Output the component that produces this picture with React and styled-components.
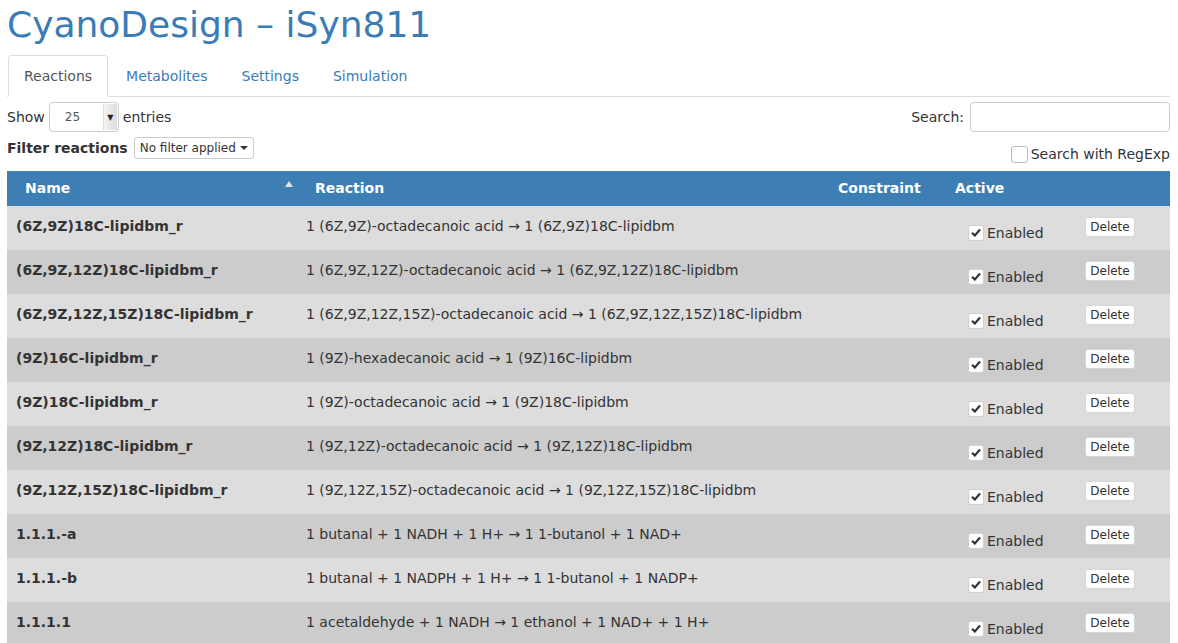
import React from "react";
import styled, { createGlobalStyle } from "styled-components";

const GlobalStyle = createGlobalStyle`
  html, body { margin: 0; padding: 0; background: #fff; }
  body {
    font-family: "DejaVu Sans", "Liberation Sans", sans-serif;
    font-size: 14px;
    color: #333;
  }
  * { box-sizing: border-box; }
`;

const Page = styled.div`
  padding: 5px 8px 0 7px;
`;

const Title = styled.h1`
  margin: 0 0 10px 0;
  font-size: 36px;
  line-height: 40px;
  font-weight: normal;
  color: #3a7cb6;
`;

const Tabs = styled.ul`
  list-style: none;
  margin: 0;
  padding: 0 0 0 1px;
  display: flex;
  border-bottom: 1px solid #ddd;
`;

const Tab = styled.li`
  margin: 0 2px -1px 0;
  padding: 10px 15px;
  line-height: 20px;
  border: 1px solid ${(p) => (p.$active ? "#ddd" : "transparent")};
  border-bottom-color: ${(p) => (p.$active ? "#fff" : "transparent")};
  border-radius: 4px 4px 0 0;
  background: ${(p) => (p.$active ? "#fff" : "transparent")};
  color: ${(p) => (p.$active ? "#555" : "#3a7cb6")};
`;

const Controls = styled.div`
  display: flex;
  justify-content: space-between;
  margin-top: 5px;
`;

const LeftCol = styled.div`
  display: flex;
  flex-direction: column;
  gap: 5px;
`;

const RightCol = styled.div`
  display: flex;
  flex-direction: column;
  align-items: flex-end;
`;

const InlineRow = styled.div`
  display: flex;
  align-items: center;
  gap: ${(p) => p.$gap || 5}px;
  height: ${(p) => p.$h}px;
  margin-top: ${(p) => p.$mt || 0}px;
`;

const Label = styled.span`
  font-weight: ${(p) => (p.$bold ? "bold" : "normal")};
  color: #333;
  line-height: 18px;
  margin-top: -1px;
`;

const SelectBox = styled.div`
  width: 70px;
  height: 30px;
  border: 1px solid #ccc;
  border-radius: 4px;
  display: flex;
  align-items: center;
  justify-content: space-between;
  padding: 1px 1px 1px 15px;
  font-size: 12px;
  color: #555;
  background: #fff;
`;

const SelectArrow = styled.span`
  width: 14px;
  height: 100%;
  background: linear-gradient(to right, #f4f4f4, #dcdcdc);
  border-left: 1px solid #e0e0e0;
  display: flex;
  align-items: center;
  justify-content: center;
  font-size: 8px;
  color: #222;
`;

const SearchInput = styled.div`
  width: 200px;
  height: 30px;
  border: 1px solid #ccc;
  border-radius: 4px;
  background: #fff;
`;

const DropButton = styled.div`
  height: 22px;
  padding: 0 5px;
  border: 1px solid #ccc;
  border-radius: 3px;
  font-size: 12px;
  color: #333;
  display: flex;
  align-items: center;
  gap: 4px;
  background: #fff;
`;

const Caret = styled.span`
  width: 0;
  height: 0;
  border-left: 4px solid transparent;
  border-right: 4px solid transparent;
  border-top: 4px solid #333;
`;

const EmptyCheck = styled.span`
  width: 17px;
  height: 17px;
  border: 1px solid #bbb;
  border-radius: 3px;
  background: #fff;
`;

const Table = styled.table`
  width: 100%;
  margin-top: 8px;
  border-collapse: collapse;
  table-layout: fixed;
`;

const HeadCell = styled.th`
  height: 35px;
  padding: 0 0 2px 18px;
  text-align: left;
  background: #3d7eb5;
  color: #fff;
  font-weight: bold;
  font-size: 14px;
  position: relative;
`;

const SortArrow = styled.span`
  position: absolute;
  right: 4px;
  top: 10px;
  width: 0;
  height: 0;
  border-left: 4px solid transparent;
  border-right: 4px solid transparent;
  border-bottom: 6px solid #dde3ea;
`;

const Row = styled.tr`
  background: ${(p) => (p.$odd ? "#dddddd" : "#cccccc")};
`;

const Cell = styled.td`
  height: 44px;
  vertical-align: top;
  padding: ${(p) => p.$pad || "10px 8px 0 9px"};
  line-height: 20px;
  font-weight: ${(p) => (p.$bold ? "bold" : "normal")};
  color: #333;
  white-space: nowrap;
  overflow: hidden;
`;

const CheckLabel = styled.label`
  display: flex;
  align-items: center;
  gap: 3px;
  height: 17px;
`;

const CheckBox = styled.span`
  width: 16px;
  height: 16px;
  border-radius: 3px;
  background: #fff;
  border: 1px solid #d0d0d0;
  display: flex;
  align-items: center;
  justify-content: center;
`;

const DeleteButton = styled.button`
  height: 20px;
  width: 50px;
  padding: 0;
  border: 1px solid #d6d6d6;
  border-radius: 3px;
  background: #fff;
  font-family: "DejaVu Sans", sans-serif;
  font-size: 12px;
  line-height: 16px;
  color: #333;
  display: block;
`;

const rows = [
  ["(6Z,9Z)18C-lipidbm_r", "1 (6Z,9Z)-octadecanoic acid → 1 (6Z,9Z)18C-lipidbm"],
  ["(6Z,9Z,12Z)18C-lipidbm_r", "1 (6Z,9Z,12Z)-octadecanoic acid → 1 (6Z,9Z,12Z)18C-lipidbm"],
  ["(6Z,9Z,12Z,15Z)18C-lipidbm_r", "1 (6Z,9Z,12Z,15Z)-octadecanoic acid → 1 (6Z,9Z,12Z,15Z)18C-lipidbm"],
  ["(9Z)16C-lipidbm_r", "1 (9Z)-hexadecanoic acid → 1 (9Z)16C-lipidbm"],
  ["(9Z)18C-lipidbm_r", "1 (9Z)-octadecanoic acid → 1 (9Z)18C-lipidbm"],
  ["(9Z,12Z)18C-lipidbm_r", "1 (9Z,12Z)-octadecanoic acid → 1 (9Z,12Z)18C-lipidbm"],
  ["(9Z,12Z,15Z)18C-lipidbm_r", "1 (9Z,12Z,15Z)-octadecanoic acid → 1 (9Z,12Z,15Z)18C-lipidbm"],
  ["1.1.1.-a", "1 butanal + 1 NADH + 1 H+ → 1 1-butanol + 1 NAD+"],
  ["1.1.1.-b", "1 butanal + 1 NADPH + 1 H+ → 1 1-butanol + 1 NADP+"],
  ["1.1.1.1", "1 acetaldehyde + 1 NADH → 1 ethanol + 1 NAD+ + 1 H+"],
];

const Check = () => (
  <svg width="10" height="9" viewBox="0 0 10 9">
    <path d="M1 4.8 L3.8 7.5 L9 1.5" fill="none" stroke="#333" strokeWidth="2.2" />
  </svg>
);

export default function App() {
  return (
    <Page>
      <GlobalStyle />
      <Title>CyanoDesign – iSyn811</Title>
      <Tabs>
        <Tab $active>Reactions</Tab>
        <Tab>Metabolites</Tab>
        <Tab>Settings</Tab>
        <Tab>Simulation</Tab>
      </Tabs>
      <Controls>
        <LeftCol>
          <InlineRow $h={30} $gap={4}>
            <Label>Show</Label>
            <SelectBox>
              25
              <SelectArrow>▼</SelectArrow>
            </SelectBox>
            <Label>entries</Label>
          </InlineRow>
          <InlineRow $h={22} $gap={6}>
            <Label $bold>Filter reactions</Label>
            <DropButton>
              No filter applied <Caret />
            </DropButton>
          </InlineRow>
        </LeftCol>
        <RightCol>
          <InlineRow $h={30} $gap={6}>
            <Label>Search:</Label>
            <SearchInput />
          </InlineRow>
          <InlineRow $h={18} $mt={13} $gap={3}>
            <EmptyCheck />
            <Label>Search with RegExp</Label>
          </InlineRow>
        </RightCol>
      </Controls>
      <Table>
        <colgroup>
          <col style={{ width: 290 }} />
          <col style={{ width: 523 }} />
          <col style={{ width: 117 }} />
          <col style={{ width: 130 }} />
          <col style={{ width: 103 }} />
        </colgroup>
        <thead>
          <tr>
            <HeadCell>
              Name
              <SortArrow />
            </HeadCell>
            <HeadCell>Reaction</HeadCell>
            <HeadCell>Constraint</HeadCell>
            <HeadCell>Active</HeadCell>
            <HeadCell />
          </tr>
        </thead>
        <tbody>
          {rows.map(([name, reaction], i) => (
            <Row key={name} $odd={i % 2 === 0}>
              <Cell $bold>{name}</Cell>
              <Cell>{reaction}</Cell>
              <Cell />
              <Cell $pad="18px 0 0 31px">
                <CheckLabel>
                  <CheckBox>
                    <Check />
                  </CheckBox>
                  Enabled
                </CheckLabel>
              </Cell>
              <Cell $pad="11px 0 0 18px">
                <DeleteButton>Delete</DeleteButton>
              </Cell>
            </Row>
          ))}
        </tbody>
      </Table>
    </Page>
  );
}
